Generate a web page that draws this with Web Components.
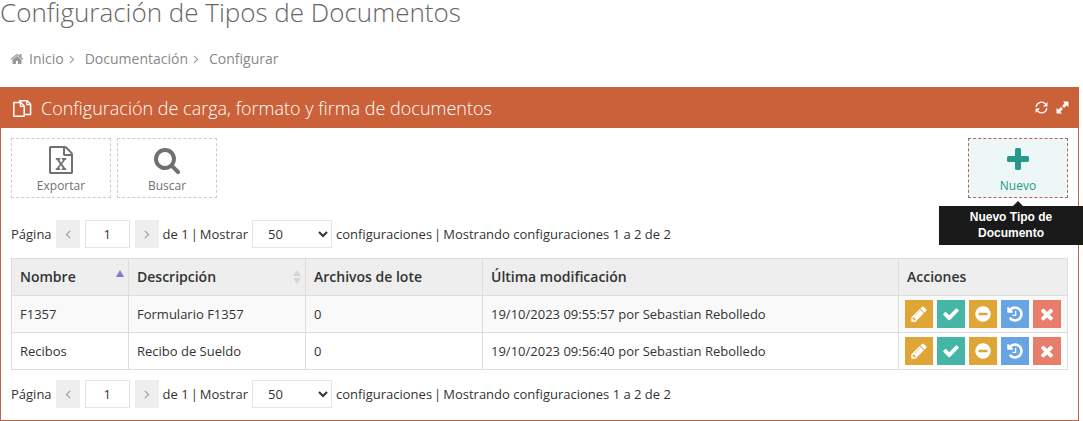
<!DOCTYPE html>
<html lang="es">
<head>
<meta charset="utf-8">
<meta name="viewport" content="width=device-width, initial-scale=1">
<title>Configuración de Tipos de Documentos</title>
<style>
  body {
    margin: 0;
    background: #fff;
    color: #333;
    font-family: 'Open Sans', sans-serif;
    font-size: 13px;
  }
</style>
</head>
<body>
<document-types-page></document-types-page>

<script>
const ICONS = {
  home: '<path d="M1472 992v480q0 26-19 45t-45 19h-384v-384h-256v384h-384q-26 0-45-19t-19-45v-480q0-1 .5-3t.5-3l575-474 575 474q1 2 1 6zm223-69l-62 74q-8 9-21 11h-3q-13 0-21-7l-692-577-692 577q-12 8-24 7-13-2-21-11l-62-74q-8-10-7-23.5t11-21.5l719-599q32-26 76-26t76 26l244 204v-195q0-14 9-23t23-9h192q14 0 23 9t9 23v408l219 182q10 8 11 21.5t-7 23.5z"/>',
  right: '<path d="M1171 960q0 13-10 23l-466 466q-10 10-23 10t-23-10l-50-50q-10-10-10-23t10-23l393-393-393-393q-10-10-10-23t10-23l50-50q10-10 23-10t23 10l466 466q10 10 10 23z"/>',
  left: '<path d="M1203 544q0 13-10 23l-393 393 393 393q10 10 10 23t-10 23l-50 50q-10 10-23 10t-23-10l-466-466q-10-10-10-23t10-23l466-466q10-10 23-10t23 10l50 50q10 10 10 23z"/>',
  excel: '<path d="M1596 380q28 28 48 76t20 88v1152q0 40-28 68t-68 28h-1344q-40 0-68-28t-28-68v-1600q0-40 28-68t68-28h896q40 0 88 20t76 48zm-444-244v376h376q-10-29-22-41l-313-313q-12-12-41-22zm384 1528v-1024h-416q-40 0-68-28t-28-68v-416h-768v1536h1280zm-979-234v106h281v-106h-75l103-161q5-7 10-16.5t7.5-13.5 3.5-4h2q1 4 5 10 2 4 4.5 7.5t6 8 6.5 8.5l107 161h-76v106h291v-106h-68l-192-273 195-282h67v-107h-279v107h74l-103 159q-4 7-10 16.5t-9 13.5l-2 3h-2q-1-4-5-10-6-11-17-23l-106-159h76v-107h-290v107h68l189 272-194 283h-68z"/>',
  search: '<path d="M1216 832q0-185-131.5-316.5t-316.5-131.5-316.5 131.5-131.5 316.5 131.5 316.5 316.5 131.5 316.5-131.5 131.5-316.5zm512 832q0 52-38 90t-90 38q-54 0-90-38l-343-342q-179 124-399 124-143 0-273.5-55.5t-225-150-150-225-55.5-273.5 55.5-273.5 150-225 225-150 273.5-55.5 273.5 55.5 225 150 150 225 55.5 273.5q0 220-124 399l343 343q37 37 37 90z"/>',
  plus: '<path d="M1600 736v192q0 40-28 68t-68 28h-416v416q0 40-28 68t-68 28h-192q-40 0-68-28t-28-68v-416h-416q-40 0-68-28t-28-68v-192q0-40 28-68t68-28h416v-416q0-40 28-68t68-28h192q40 0 68 28t28 68v416h416q40 0 68 28t28 68z"/>',
  pencil: '<path d="M491 1536l91-91-235-235-91 91v107h128v128h107zm523-928q0-22-22-22-10 0-17 7l-542 542q-7 7-7 17 0 22 22 22 10 0 17-7l542-542q7-7 7-17zm-54-192l416 416-832 832h-416v-416zm683 96q0 53-37 90l-166 166-416-416 166-165q36-38 90-38 53 0 91 38l235 234q37 39 37 91z"/>',
  check: '<path d="M1671 566q0 40-28 68l-724 724-136 136q-28 28-68 28t-68-28l-136-136-362-362q-28-28-28-68t28-68l136-136q28-28 68-28t68 28l294 295 656-657q28-28 68-28t68 28l136 136q28 28 28 68z"/>',
  minus: '<path d="M1344 960v-128q0-26-19-45t-45-19h-768q-26 0-45 19t-19 45v128q0 26 19 45t45 19h768q26 0 45-19t19-45zm320-64q0 209-103 385.5t-279.5 279.5-385.5 103-385.5-103-279.5-279.5-103-385.5 103-385.5 279.5-279.5 385.5-103 385.5 103 279.5 279.5 103 385.5z"/>',
  history: '<path d="M1664 896q0 156-61 298t-164 245-245 164-298 61q-172 0-327-72.5t-264-204.5q-7-10-6.5-22.5t8.5-20.5l137-138q10-9 25-9 16 2 23 12 73 95 179 147t225 52q104 0 198.5-40.5t163.5-109.5 109.5-163.5 40.5-198.5-40.5-198.5-109.5-163.5-163.5-109.5-198.5-40.5q-98 0-188 35.5t-160 101.5l137 138q31 30 14 69-17 40-59 40h-448q-26 0-45-19t-19-45v-448q0-42 40-59 39-17 69 14l130 129q107-101 244.5-156.5t284.5-55.5q156 0 298 61t245 164 164 245 61 298zm-640-288v448q0 14-9 23t-23 9h-320q-14 0-23-9t-9-23v-64q0-14 9-23t23-9h224v-352q0-14 9-23t23-9h64q14 0 23 9t9 23z"/>',
  times: '<path d="M1490 1322q0 40-28 68l-136 136q-28 28-68 28t-68-28l-294-294-294 294q-28 28-68 28t-68-28l-136-136q-28-28-28-68t28-68l294-294-294-294q-28-28-28-68t28-68l136-136q28-28 68-28t68 28l294 294 294-294q28-28 68-28t68 28l136 136q28 28 28 68t-28 68l-294 294 294 294q28 28 28 68z"/>',
  docs: '<g transform="scale(89.6)" fill="none" stroke="currentColor" stroke-width="1.5" stroke-linejoin="round"><path d="M1.8 4.6h7l3.4 3.4v10.2H1.8z"/><path d="M8.4 4.8v3.6h3.6" stroke-width="1.3"/><path d="M7.8 4.2V2.8h7.4l3.4 3.4v10.2h-5.8"/><path d="M14.8 3v3.6h3.6" stroke-width="1.3"/></g>',
  reload: '<g transform="scale(128)"><path d="M1.2 6.4A5.8 5.8 0 0 1 11.4 3.4M12.8 7.6A5.8 5.8 0 0 1 2.6 10.6" fill="none" stroke="currentColor" stroke-width="1.3"/><path d="M13.4 1v4.8H8.6zM.6 13V8.2h4.8z"/></g>',
  expand: '<g transform="scale(128)"><path d="M13.4.6v6l-1.9-1.9-2.8 2.8-2.2-2.2 2.8-2.8L7.4.6zM.6 13.4v-6l1.9 1.9 2.8-2.8 2.2 2.2-2.8 2.8 1.9 1.9z"/></g>'
};

class UiIcon extends HTMLElement {
  connectedCallback() {
    this.attachShadow({ mode: 'open' });
    this.shadowRoot.innerHTML = `
      <style>
        :host { display: inline-flex; width: 14px; height: 14px; flex: none; }
        svg { width: 100%; height: 100%; fill: currentColor; }
      </style>
      <svg viewBox="0 0 1792 1792" aria-hidden="true">${ICONS[this.getAttribute('name')]}</svg>
    `;
  }
}

class BreadCrumb extends HTMLElement {
  connectedCallback() {
    this.attachShadow({ mode: 'open' });
    this.shadowRoot.innerHTML = `
      <style>
        :host { display: block; color: #888; font-size: 14px; line-height: 20px; }
        nav { display: flex; align-items: center; }
        a { color: inherit; text-decoration: none; }
        a:hover { text-decoration: underline; }
        .home { margin-right: 5px; color: #999; }
        .sep { margin: 0 6px 0 1px; color: #999; }
      </style>
      <nav aria-label="Ruta">
        <ui-icon class="home" name="home"></ui-icon>
        <a href="#inicio">Inicio</a>
        <ui-icon class="sep" name="right"></ui-icon>
        <a href="#documentacion">Documentación</a>
        <ui-icon class="sep" name="right"></ui-icon>
        <a href="#configurar">Configurar</a>
      </nav>
    `;
  }
}

class PortletBox extends HTMLElement {
  connectedCallback() {
    this.attachShadow({ mode: 'open' });
    this.shadowRoot.innerHTML = `
      <style>
        :host { display: block; border: 1px solid #b8674a; border-top: 0; }
        header {
          display: flex;
          align-items: center;
          height: 41px;
          margin: 0 -1px;
          padding: 0 10px 0 12px;
          background: #cb6138;
          color: #fff;
        }
        h2 { flex: 1; margin: 0 0 0 9px; font-size: 18px; font-weight: 300; line-height: 20px; }
        .docs { width: 20px; height: 20px; }
        .tools { display: flex; gap: 8px; }
        button { display: flex; padding: 0; border: 0; background: none; color: inherit; cursor: pointer; }
        .tools ui-icon { width: 13px; height: 13px; }
        .body { padding: 10px 10px 12px; }
      </style>
      <header>
        <ui-icon class="docs" name="docs"></ui-icon>
        <h2><slot name="title"></slot></h2>
        <div class="tools">
          <button type="button" aria-label="Recargar"><ui-icon name="reload"></ui-icon></button>
          <button type="button" aria-label="Pantalla completa"><ui-icon name="expand"></ui-icon></button>
        </div>
      </header>
      <div class="body"><slot></slot></div>
    `;
  }
}

class ToolButton extends HTMLElement {
  connectedCallback() {
    const tip = this.getAttribute('tip');
    this.attachShadow({ mode: 'open' });
    this.shadowRoot.innerHTML = `
      <style>
        :host { display: block; position: relative; }
        button {
          display: flex;
          flex-direction: column;
          align-items: center;
          justify-content: flex-end;
          gap: 4px;
          box-sizing: border-box;
          width: 100px;
          height: 60px;
          padding: 0 0 3px;
          border: 1px dashed #ccc;
          background: #fff;
          color: #707070;
          font: 12px/16px 'Open Sans', sans-serif;
          cursor: pointer;
        }
        ui-icon { width: 28px; height: 28px; }
        :host([active]) button { border-color: #b8674a; background: #edf7f7; color: #26998b; }
        .tip {
          position: absolute;
          top: 68px;
          right: -15px;
          box-sizing: border-box;
          width: 144px;
          padding: 3px 8px 4px;
          background: #1a1a1a;
          color: #fff;
          font: bold 12px/16px 'Liberation Sans', Arial, sans-serif;
          text-align: center;
        }
        .arrow {
          position: absolute;
          top: 63px;
          left: 45px;
          border: 5px solid transparent;
          border-top: 0;
          border-bottom-color: #1a1a1a;
        }
      </style>
      <button type="button"><ui-icon name="${this.getAttribute('icon')}"></ui-icon><slot></slot></button>
      ${tip ? `<div class="arrow"></div><div class="tip" role="tooltip">${tip}</div>` : ''}
    `;
  }
}

class TablePager extends HTMLElement {
  connectedCallback() {
    this.attachShadow({ mode: 'open' });
    this.shadowRoot.innerHTML = `
      <style>
        :host { display: flex; align-items: center; gap: 4px; line-height: 20px; }
        button, input, select {
          box-sizing: border-box;
          height: 28px;
          margin: 0;
          border: 1px solid #e5e5e5;
          background-color: #fff;
          color: #333;
          font: 13px 'Open Sans', sans-serif;
        }
        button {
          display: flex;
          align-items: center;
          justify-content: center;
          width: 24px;
          padding: 0;
          border: 0;
          background-color: #eee;
          color: #999;
        }
        input { width: 45px; margin: 0 1px; padding: 0; text-align: center; }
        select { width: 80px; padding: 0 0 0 11px; border-radius: 0; }
        .bar { margin: 0 -2px; }
      </style>
      <label for="page">Página</label>
      <button type="button" aria-label="Anterior"><ui-icon name="left"></ui-icon></button>
      <input id="page" type="text" value="1">
      <button type="button" aria-label="Siguiente"><ui-icon name="right"></ui-icon></button>
      <span>de 1</span>
      <span class="bar">|</span>
      <label for="size">Mostrar</label>
      <select id="size"><option>20</option><option selected>50</option><option>100</option></select>
      <span>configuraciones</span>
      <span class="bar">|</span>
      <span>Mostrando configuraciones 1 a 2 de 2</span>
    `;
  }
}

class ActionButton extends HTMLElement {
  connectedCallback() {
    this.attachShadow({ mode: 'open' });
    this.shadowRoot.innerHTML = `
      <style>
        :host { display: block; --bg: #dfa537; }
        :host([tone="green"]) { --bg: #45b6a6; }
        :host([tone="blue"]) { --bg: #68a4e3; }
        :host([tone="red"]) { --bg: #e87d6c; }
        button {
          display: flex;
          align-items: center;
          justify-content: center;
          width: 28px;
          height: 28px;
          padding: 0;
          border: 0;
          background: var(--bg);
          color: #fff;
          cursor: pointer;
        }
        ui-icon { width: 18px; height: 18px; }
      </style>
      <button type="button" aria-label="${this.getAttribute('label')}">
        <ui-icon name="${this.getAttribute('icon')}"></ui-icon>
      </button>
    `;
  }
}

const ROWS = [
  ['F1357', 'Formulario F1357', '0', '19/10/2023 09:55:57 por Sebastian Rebolledo'],
  ['Recibos', 'Recibo de Sueldo', '0', '19/10/2023 09:56:40 por Sebastian Rebolledo']
];

class DocumentTable extends HTMLElement {
  connectedCallback() {
    const actions = `
      <td class="actions"><div>
        <action-button icon="pencil" label="Editar"></action-button>
        <action-button icon="check" tone="green" label="Activar"></action-button>
        <action-button icon="minus" label="Desactivar"></action-button>
        <action-button icon="history" tone="blue" label="Historial"></action-button>
        <action-button icon="times" tone="red" label="Eliminar"></action-button>
      </div></td>`;
    this.attachShadow({ mode: 'open' });
    this.shadowRoot.innerHTML = `
      <style>
        :host { display: block; }
        table { width: 100%; border-collapse: collapse; table-layout: fixed; }
        th, td { height: 36px; padding: 0 8px; border: 1px solid #ddd; text-align: left; line-height: 20px; }
        th { box-sizing: border-box; height: 37px; background: #eee; font-size: 14px; font-weight: 600; }
        tbody tr:nth-child(odd) { background: #f9f9f9; }
        .name { width: 117px; }
        .desc, .lote { width: 177px; }
        .acts { width: 169px; }
        .head { display: flex; align-items: center; justify-content: space-between; }
        .sort { display: flex; flex-direction: column; gap: 2px; margin-right: -4px; }
        .sort i { border: 4px solid transparent; }
        .up { border-top: 0 !important; border-bottom: 6px solid #d5d5d5 !important; }
        .down { border-bottom: 0 !important; border-top: 6px solid #d5d5d5 !important; }
        .asc .up { border-bottom: 7px solid #7d7dd6 !important; }
        .asc .down { visibility: hidden; }
        .actions { padding: 0 6px; }
        .actions div { display: flex; gap: 4px; }
      </style>
      <table>
        <thead>
          <tr>
            <th class="name" aria-sort="ascending"><div class="head">Nombre<span class="sort asc"><i class="up"></i><i class="down"></i></span></div></th>
            <th class="desc"><div class="head">Descripción<span class="sort"><i class="up"></i><i class="down"></i></span></div></th>
            <th class="lote">Archivos de lote</th>
            <th>Última modificación</th>
            <th class="acts">Acciones</th>
          </tr>
        </thead>
        <tbody>
          ${ROWS.map(row => `<tr>${row.map(cell => `<td>${cell}</td>`).join('')}${actions}</tr>`).join('')}
        </tbody>
      </table>
    `;
  }
}

class DocumentTypesPage extends HTMLElement {
  connectedCallback() {
    this.attachShadow({ mode: 'open' });
    this.shadowRoot.innerHTML = `
      <style>
        :host { display: block; padding-right: 4px; }
        h1 { margin: 0; color: #666; font-size: 26px; font-weight: 300; line-height: 24px; }
        bread-crumb { margin: 25px 0 18px 10px; }
        .toolbar { display: flex; gap: 6px; margin-bottom: 22px; }
        .new { margin-left: auto; }
        document-table { margin: 10px 0; }
      </style>
      <h1>Configuración de Tipos de Documentos</h1>
      <bread-crumb></bread-crumb>
      <portlet-box>
        <span slot="title">Configuración de carga, formato y firma de documentos</span>
        <div class="toolbar">
          <tool-button icon="excel">Exportar</tool-button>
          <tool-button icon="search">Buscar</tool-button>
          <tool-button class="new" icon="plus" active tip="Nuevo Tipo de Documento">Nuevo</tool-button>
        </div>
        <table-pager></table-pager>
        <document-table></document-table>
        <table-pager></table-pager>
      </portlet-box>
    `;
  }
}

customElements.define('ui-icon', UiIcon);
customElements.define('bread-crumb', BreadCrumb);
customElements.define('portlet-box', PortletBox);
customElements.define('tool-button', ToolButton);
customElements.define('table-pager', TablePager);
customElements.define('action-button', ActionButton);
customElements.define('document-table', DocumentTable);
customElements.define('document-types-page', DocumentTypesPage);
</script>
</body>
</html>
